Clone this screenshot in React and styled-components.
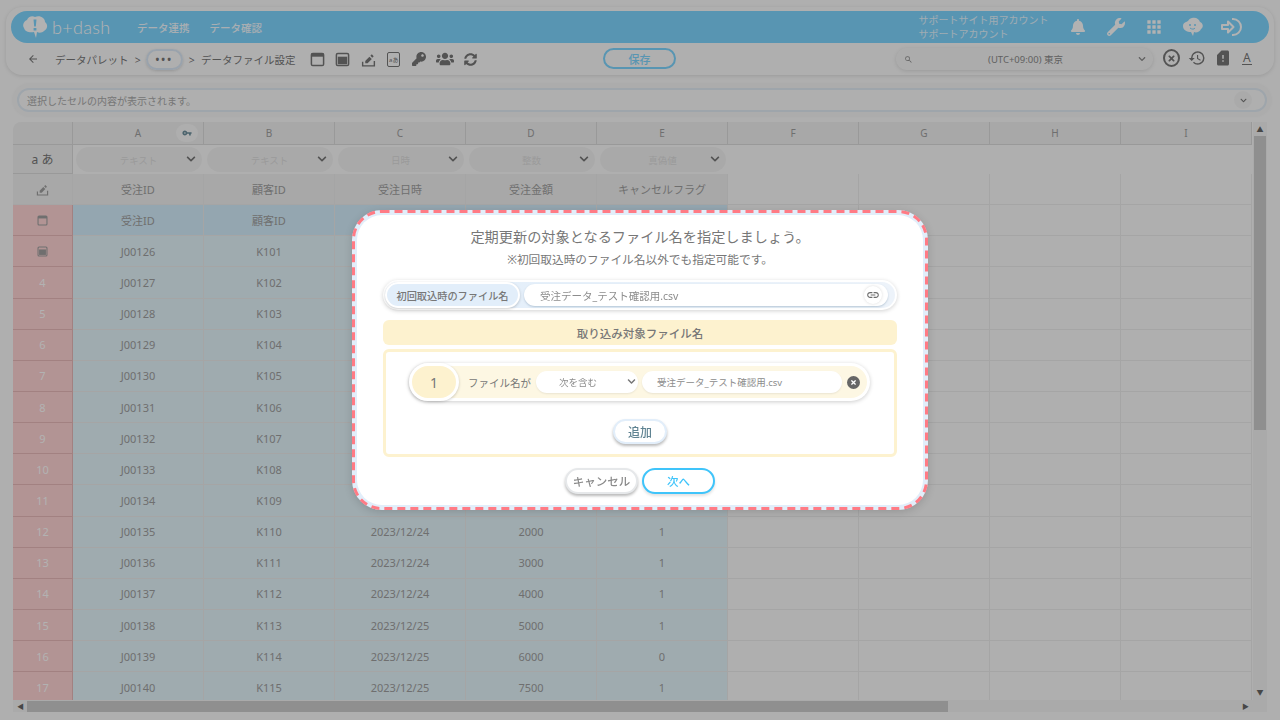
import React from "react";
import styled, { createGlobalStyle } from "styled-components";
import {
  FaBell,
  FaWrench,
  FaKey,
  FaUsers,
  FaSyncAlt,
  FaChevronDown,
  FaTimes,
} from "react-icons/fa";
import {
  MdApps,
  MdHistory,
  MdSearch,
  MdSimCardAlert,
  MdArrowBack,
  MdVpnKey,
  MdLink,
} from "react-icons/md";

const GlobalStyle = createGlobalStyle`
  html, body {
    margin: 0;
    height: 100%;
    overflow: hidden;
    background: #fbfbfb;
    font-family: "Noto Sans", "Noto Sans CJK JP", sans-serif;
    color: #777;
  }
  * { box-sizing: border-box; }
`;

const Page = styled.div`
  width: 1280px;
  height: 720px;
  display: flex;
  flex-direction: column;
  overflow: hidden;
`;

const HeaderCard = styled.header`
  margin: 7px 6px 0;
  height: 68px;
  padding: 4px 5px 0;
  border-radius: 16px;
  background: #fbfbfb;
  box-shadow: 0 1px 4px rgba(0, 0, 0, 0.12);
`;

const BlueBar = styled.div`
  height: 32px;
  border-radius: 16px;
  background: #7fd6ff;
  display: flex;
  align-items: center;
  padding: 0 19px 0 11px;
  color: #fff;
`;

const Logo = styled.div`
  display: flex;
  align-items: center;
  gap: 3px;
  width: 115px;
  font-family: "Lato", sans-serif;
  font-size: 18px;
  font-weight: 300;
  letter-spacing: 0.3px;
`;

const NavLink = styled.span`
  font-size: 10.5px;
  font-weight: 500;
  margin-right: 20px;
  white-space: nowrap;
  opacity: 0.9;
`;

const Account = styled.div`
  margin-left: auto;
  margin-right: 9px;
  width: 131px;
  font-size: 10px;
  line-height: 14.5px;
  white-space: nowrap;
  opacity: 0.8;
`;

const BarIcons = styled.div`
  display: grid;
  grid-auto-flow: column;
  grid-auto-columns: 38.3px;
  align-items: center;
  justify-items: center;
`;

const Toolbar = styled.div`
  height: 32px;
  display: flex;
  align-items: center;
  padding-left: 16px;
  font-size: 10.5px;
  color: #777;
  position: relative;
`;

const Crumb = styled.span`
  white-space: nowrap;
  word-spacing: 3.5px;
  margin-left: ${(p) => p.$left || 0}px;
`;

const DotsButton = styled.span`
  width: 37px;
  height: 21px;
  margin: 0 6px 0 5px;
  border-radius: 11px;
  border: 2px solid #dbe9f6;
  box-shadow: 0 1px 3px rgba(0, 0, 0, 0.15);
  display: flex;
  align-items: center;
  justify-content: center;
  font-weight: 700;
  letter-spacing: 2px;
  font-size: 10px;
`;

const ToolIcons = styled.div`
  display: grid;
  grid-auto-flow: column;
  grid-auto-columns: 25.5px;
  align-items: center;
  justify-items: center;
  margin-left: 9px;
  color: #777;
`;

const TextIconBox = styled.span`
  width: 13px;
  height: 15px;
  border: 1.5px solid #777;
  border-radius: 2px;
  font-size: 6px;
  display: flex;
  align-items: center;
  justify-content: center;
  white-space: nowrap;
`;

const SaveButton = styled.span`
  position: absolute;
  left: 592px;
  top: 5px;
  width: 73px;
  height: 21px;
  border-radius: 11px;
  border: 2px solid #7fd6ff;
  color: #7fd6ff;
  background: #fbfbfb;
  font-size: 11px;
  font-weight: 500;
  display: flex;
  align-items: center;
  justify-content: center;
`;

const ZoneSelect = styled.div`
  position: absolute;
  left: 885px;
  top: 5px;
  width: 257px;
  height: 22px;
  border-radius: 11px;
  background: #f7f7f7;
  box-shadow: 0 1px 4px rgba(0, 0, 0, 0.12);
  display: flex;
  align-items: center;
  justify-content: space-between;
  padding: 0 7px 0 8px;
  font-size: 9.5px;
  color: #8a8a8a;
`;

const RightIcons = styled.div`
  position: absolute;
  left: 1152px;
  top: 6px;
  display: flex;
  align-items: center;
  gap: 8px;
  font-size: 18px;
  color: #777;
`;

const CloseOval = styled.span`
  width: 17px;
  height: 18px;
  border-radius: 50%;
  border: 2px solid #777;
  font-size: 9px;
  display: flex;
  align-items: center;
  justify-content: center;
`;

const UnderlinedA = styled.span`
  font-size: 12px;
  line-height: 13px;
  border-bottom: 1.5px solid #777;
  padding: 0 1px;
  margin-left: 2px;
`;

const FormulaWrap = styled.div`
  margin: 9px 9px 0 13px;
  height: 32px;
  padding: 4px;
  border-radius: 16px;
  background: #f7f7f7;
  box-shadow: 0 0 3px rgba(0, 0, 0, 0.06);
`;

const FormulaBar = styled.div`
  height: 24px;
  border: 2px solid #e2ecf5;
  border-radius: 12px;
  background: #fbfbfb;
  display: flex;
  align-items: center;
  justify-content: space-between;
  padding: 0 13px 0 8px;
  font-size: 10px;
  color: #aaa;
`;

const ChevronBadge = styled.span`
  width: 18px;
  height: 18px;
  border-radius: 50%;
  background: #f4f4f4;
  color: #777;
  font-size: 7px;
  display: flex;
  align-items: center;
  justify-content: center;
`;

const GridArea = styled.div`
  margin: 6px 0 0 13px;
  display: grid;
  grid-template-columns: 1240px 14px;
  grid-template-rows: 578px 12px;
  width: 1254px;
`;

const Sheet = styled.div`
  display: grid;
  grid-template-columns: 60px repeat(9, 131px);
  grid-template-rows: 23px 29px repeat(17, 31.15px);
  overflow: hidden;
  border-top-left-radius: 8px;
  font-size: 11px;
`;

const tones = {
  head: "#f1f1f1",
  name: "#f1f1f1",
  side: "#ffd4d4",
  titleRow: "#d5eefc",
  data: "#e4f5fb",
  empty: "#fbfbfb",
};

const Cell = styled.div`
  position: relative;
  display: flex;
  align-items: center;
  justify-content: center;
  background: ${(p) => tones[p.$tone]};
  color: ${(p) => (p.$white ? "#fff" : "#a0a0a0")};
  border-right: ${(p) => (p.$noLine ? "none" : "1px solid #e9e9e9")};
  border-bottom: ${(p) => (p.$noLine ? "none" : "1px solid #e9e9e9")};
  border-color: ${(p) => (p.$tone === "head" ? "#dcdcdc" : p.$tone === "side" ? "#e8b9b9" : "#ececec")};
  font-size: ${(p) => (p.$tone === "head" ? "10px" : "11px")};
`;

const KeyBadge = styled.span`
  position: absolute;
  right: 5px;
  top: 2px;
  width: 22px;
  height: 18px;
  border-radius: 9px;
  background: #f9f9f9;
  color: #6c8f9c;
  font-size: 10px;
  display: flex;
  align-items: center;
  justify-content: center;
`;

const TypeSelect = styled.div`
  width: 126px;
  height: 25px;
  border-radius: 13px;
  background: #f3f3f3;
  color: #ddd;
  font-size: 9.5px;
  display: flex;
  align-items: center;
  justify-content: center;
  position: relative;
`;

const TypeChevron = styled.span`
  position: absolute;
  right: 6px;
  top: 7px;
  color: #777;
  font-size: 10px;
  line-height: 10px;
`;

const TypeLabel = styled.span`
  font-size: 12px;
  color: #777;
`;

const ScrollTrack = styled.div`
  background: #f4f4f4;
  display: flex;
  flex-direction: ${(p) => (p.$horizontal ? "row" : "column")};
  align-items: center;
  justify-content: space-between;
  padding: ${(p) => (p.$horizontal ? "0 4px" : "4px 0")};
  color: #666;
  font-size: 7px;
  line-height: 7px;
`;

const ScrollThumb = styled.div`
  background: #cdcdcd;
  ${(p) =>
    p.$horizontal
      ? "height: 11px; width: 921px; margin: 0 auto 0 3px;"
      : "width: 12px; height: 294px; margin: 3px 0 auto;"}
`;

const Overlay = styled.div`
  position: fixed;
  inset: 0;
  background: rgba(0, 0, 0, 0.3);
  backdrop-filter: blur(0.7px);
`;

const Modal = styled.div`
  position: fixed;
  left: 352px;
  top: 210px;
  width: 576px;
  height: 300px;
  border-radius: 30px;
  background: #e2eefa;
  padding: 5px;
  box-shadow: 0 2px 8px rgba(0, 0, 0, 0.15);
`;

const DashedEdge = styled.svg`
  position: absolute;
  inset: 0;
  pointer-events: none;
`;

const ModalBody = styled.div`
  height: 100%;
  border-radius: 25px;
  background: #fff;
  padding: 12px 26px 0;
  display: flex;
  flex-direction: column;
  align-items: center;
  color: #777;
`;

const Title = styled.div`
  font-size: 14.2px;
  line-height: 20px;
  text-align: center;
`;

const SubTitle = styled.div`
  font-size: 11.7px;
  line-height: 16px;
  margin-top: 4px;
  text-align: center;
`;

const FileRow = styled.div`
  width: 514px;
  height: 30px;
  margin-top: 13px;
  padding: 2px;
  border-radius: 15px;
  background: #fff;
  box-shadow: 0 1px 4px rgba(0, 0, 0, 0.18);
`;

const FileRowInner = styled.div`
  height: 100%;
  border-radius: 13px;
  background: linear-gradient(to right, #e2eefa, #edf3fa);
  display: flex;
  align-items: center;
`;

const FileLabel = styled.span`
  width: 135px;
  height: 26px;
  border-radius: 13px;
  border: 2px solid #fff;
  background: #e2eefa;
  box-shadow: 0 1px 3px rgba(0, 0, 0, 0.2);
  font-size: 10.2px;
  font-weight: 500;
  display: flex;
  align-items: center;
  justify-content: center;
`;

const FileInput = styled.div`
  margin-left: 4px;
  width: 364px;
  height: 22px;
  border-radius: 11px;
  background: #fff;
  box-shadow: 0 1px 2px rgba(90, 120, 150, 0.35);
  padding-left: 16px;
  font-size: 10.5px;
  color: #8c8c8c;
  display: flex;
  align-items: center;
  position: relative;
`;

const LinkBadge = styled.span`
  position: absolute;
  right: 6px;
  top: 2px;
  width: 18px;
  height: 18px;
  border-radius: 50%;
  background: #fff;
  box-shadow: 0 0 3px rgba(0, 0, 0, 0.15);
  font-size: 14px;
  color: #6d6d6d;
  display: flex;
  align-items: center;
  justify-content: center;
`;

const SectionHead = styled.div`
  width: 514px;
  height: 25px;
  margin-top: 10px;
  border-radius: 6px;
  background: #fdf2cf;
  font-size: 11.5px;
  font-weight: 500;
  display: flex;
  align-items: center;
  justify-content: center;
`;

const SectionBox = styled.div`
  width: 514px;
  height: 108px;
  margin-top: 4px;
  border: 3px solid #fdf2cf;
  border-radius: 6px;
  padding: 11px 0 0 23px;
  display: flex;
  flex-direction: column;
`;

const ConditionRow = styled.div`
  width: 461px;
  height: 38px;
  padding: 3px;
  border-radius: 19px;
  background: #fff;
  box-shadow: 0 1px 4px rgba(0, 0, 0, 0.2);
`;

const ConditionInner = styled.div`
  height: 100%;
  border-radius: 16px;
  background: #fdf7e3;
  display: flex;
  align-items: center;
`;

const NumberBadge = styled.span`
  width: 50px;
  height: 38px;
  margin-left: -3px;
  border-radius: 19px;
  border: 3px solid #fff;
  background: #fdf2cf;
  box-shadow: 0 1px 3px rgba(0, 0, 0, 0.2);
  font-size: 14px;
  display: flex;
  align-items: center;
  justify-content: center;
  flex-shrink: 0;
`;

const ConditionLabel = styled.span`
  margin-left: 9px;
  font-size: 10.5px;
  white-space: nowrap;
`;

const ConditionSelect = styled.div`
  width: 102px;
  height: 22px;
  margin-left: 5px;
  border-radius: 11px;
  background: #fff;
  box-shadow: 0 1px 2px rgba(0, 0, 0, 0.08);
  font-size: 9.5px;
  color: #8c8c8c;
  display: flex;
  align-items: center;
  justify-content: center;
  padding-right: 18px;
  position: relative;
`;

const SelectChevron = styled.span`
  position: absolute;
  right: 2px;
  top: 6px;
  font-size: 9px;
  line-height: 9px;
  color: #777;
`;

const ConditionInput = styled.div`
  width: 200px;
  height: 22px;
  margin-left: 4px;
  border-radius: 11px;
  background: #fff;
  box-shadow: 0 1px 2px rgba(0, 0, 0, 0.08);
  padding-left: 15px;
  font-size: 9.5px;
  color: #8c8c8c;
  display: flex;
  align-items: center;
`;

const RemoveDot = styled.span`
  width: 13px;
  height: 13px;
  margin-left: 5px;
  border-radius: 50%;
  background: #666;
  color: #fff;
  font-size: 7px;
  display: flex;
  align-items: center;
  justify-content: center;
`;

const AddButton = styled.span`
  align-self: center;
  margin: 18px 23px 0 0;
  width: 54px;
  height: 25px;
  border-radius: 13px;
  border: 2px solid #e2eefa;
  background: #fff;
  box-shadow: 0 2px 3px rgba(0, 0, 0, 0.28);
  color: #5f8392;
  font-size: 12px;
  font-weight: 500;
  display: flex;
  align-items: center;
  justify-content: center;
`;

const Actions = styled.div`
  display: flex;
  gap: 4px;
  margin-top: 11px;
`;

const ActionButton = styled.span`
  width: 73px;
  height: 26px;
  border-radius: 13px;
  border: 2px solid ${(p) => (p.$primary ? "#3fc4fa" : "#e6e8ea")};
  background: #fff;
  box-shadow: 0 2px 3px rgba(0, 0, 0, ${(p) => (p.$primary ? "0.12" : "0.28")});
  color: ${(p) => (p.$primary ? "#3fc4fa" : "#8a8a8a")};
  font-size: 11.5px;
  font-weight: 500;
  display: flex;
  align-items: center;
  justify-content: center;
`;

const columns = ["A", "B", "C", "D", "E", "F", "G", "H", "I"];
const types = ["テキスト", "テキスト", "日時", "整数", "真偽値"];
const names = ["受注ID", "顧客ID", "受注日時", "受注金額", "キャンセルフラグ"];
const titles = ["受注ID", "顧客ID"];

// the first nine rows sit behind the dialog from column C on
const rows = [
  [], [], [], [], [], [], [], [], [],
  ["2023/12/24", 2000, 1],
  ["2023/12/24", 3000, 1],
  ["2023/12/24", 4000, 1],
  ["2023/12/25", 5000, 1],
  ["2023/12/25", 6000, 0],
  ["2023/12/25", 7500, 1],
].map((r, i) => [`J00${126 + i}`, `K${101 + i}`, ...r]);

const WindowIcon = ({ size = 15, filled }) => (
  <svg width={size} height={size} viewBox="0 0 16 16" fill="none">
    <rect x="1.5" y="1.5" width="13" height="13" rx="1.5" stroke="currentColor" strokeWidth="1.6" />
    {filled ? (
      <rect x="3" y="5" width="10" height="8" fill="currentColor" />
    ) : (
      <rect x="1.5" y="1.5" width="13" height="3.5" fill="currentColor" />
    )}
  </svg>
);

const PenIcon = ({ size = 15 }) => (
  <svg width={size} height={size} viewBox="0 0 16 16" fill="currentColor">
    <path d="M9 5l2.5 2.5L7 12H4.5V9.5z" />
    <path d="M10 4l1.5-1.5 2 2L12 6z" />
    <path d="M1 10.5h1.5V14h11V9.5H15V15.5H1z" />
  </svg>
);

const LogoMark = () => (
  <svg width="27" height="24" viewBox="0 0 27 24">
    <path
      d="M13 2c5-2 10 1 10 5 3 2 3 7-1 9-2 2-5 2-7 1l-1 6-2-6c-4 1-9 0-10-4-2-3 0-7 3-8 1-3 5-5 8-3z"
      fill="#fff"
    />
    <path d="M11.5 4.5h3l-.7 7h-1.6z M11.6 13h2.8v2.6h-2.8z" fill="#7fd6ff" />
  </svg>
);

const ChatFace = () => (
  <svg width="22" height="20" viewBox="0 0 22 20">
    <path d="M10 1c4-1 7 1 8 4 3 1 4 5 1 7-1 3-5 4-7 3l-1 4-2-4c-4 0-8-2-8-6s4-4 5-5c1-2 3-3 4-3z" fill="currentColor" />
    <circle cx="8" cy="8" r="1" fill="#7fd6ff" />
    <circle cx="13" cy="8" r="1" fill="#7fd6ff" />
    <path d="M8 11c2 1.5 4 1.5 5 0" stroke="#7fd6ff" strokeWidth="1" fill="none" />
  </svg>
);

const LoginIcon = () => (
  <svg width="22" height="20" viewBox="0 0 22 20" fill="none" stroke="currentColor" strokeWidth="2">
    <path d="M2 8h6V4.5L13.5 10 8 15.5V12H2z" strokeLinejoin="round" />
    <path d="M12 2h1a8 8 0 0 1 0 16h-1" />
  </svg>
);

const App = () => (
  <>
    <GlobalStyle />
    <Page>
      <HeaderCard>
        <BlueBar>
          <Logo>
            <LogoMark />
            b+dash
          </Logo>
          <NavLink>データ連携</NavLink>
          <NavLink>データ確認</NavLink>
          <Account>
            サポートサイト用アカウント
            <br />
            サポートアカウント
          </Account>
          <BarIcons>
            <FaBell size={16} />
            <FaWrench size={18} />
            <MdApps size={20} />
            <ChatFace />
            <LoginIcon />
          </BarIcons>
        </BlueBar>
        <Toolbar>
          <MdArrowBack size={12} />
          <Crumb $left={16}>データパレット &gt;</Crumb>
          <DotsButton>•••</DotsButton>
          <Crumb>&gt; データファイル設定</Crumb>
          <ToolIcons>
            <WindowIcon />
            <WindowIcon filled />
            <PenIcon />
            <TextIconBox>aあ</TextIconBox>
            <FaKey size={14} />
            <FaUsers size={18} />
            <FaSyncAlt size={13} />
          </ToolIcons>
          <SaveButton>保存</SaveButton>
          <ZoneSelect>
            <MdSearch size={9} />
            <span>(UTC+09:00) 東京</span>
            <FaChevronDown size={8} />
          </ZoneSelect>
          <RightIcons>
            <CloseOval>
              <FaTimes />
            </CloseOval>
            <MdHistory size={18} />
            <MdSimCardAlert size={18} />
            <UnderlinedA>A</UnderlinedA>
          </RightIcons>
        </Toolbar>
      </HeaderCard>

      <FormulaWrap>
        <FormulaBar>
          選択したセルの内容が表示されます。
          <ChevronBadge>
            <FaChevronDown />
          </ChevronBadge>
        </FormulaBar>
      </FormulaWrap>

      <GridArea>
        <Sheet>
          <Cell $tone="head" />
          {columns.map((c) => (
            <Cell key={c} $tone="head">
              {c}
              {c === "A" && (
                <KeyBadge>
                  <MdVpnKey />
                </KeyBadge>
              )}
            </Cell>
          ))}

          <Cell $tone="head">
            <TypeLabel>a あ</TypeLabel>
          </Cell>
          {columns.map((c, i) =>
            types[i] ? (
              <Cell key={c} $tone="empty" $noLine>
                <TypeSelect>
                  {types[i]}
                  <TypeChevron>
                    <FaChevronDown />
                  </TypeChevron>
                </TypeSelect>
              </Cell>
            ) : (
              <Cell key={c} $tone="empty" $noLine />
            )
          )}

          <Cell $tone="name">
            <PenIcon size={13} />
          </Cell>
          {columns.map((c, i) =>
            names[i] ? (
              <Cell key={c} $tone="name">
                {names[i]}
              </Cell>
            ) : (
              <Cell key={c} $tone="empty" />
            )
          )}

          <Cell $tone="side">
            <WindowIcon size={11} />
          </Cell>
          {columns.map((c, i) =>
            i < 5 ? (
              <Cell key={c} $tone="titleRow">
                {titles[i]}
              </Cell>
            ) : (
              <Cell key={c} $tone="empty" />
            )
          )}

          {rows.map((row, r) => (
            <React.Fragment key={row[0]}>
              <Cell $tone="side" $white={r > 0}>
                {r === 0 ? <WindowIcon size={11} filled /> : r + 3}
              </Cell>
              {columns.map((c, i) =>
                i < 5 ? (
                  <Cell key={c} $tone="data">
                    {row[i]}
                  </Cell>
                ) : (
                  <Cell key={c} $tone="empty" />
                )
              )}
            </React.Fragment>
          ))}
        </Sheet>
        <ScrollTrack>
          <span>▲</span>
          <ScrollThumb />
          <span>▼</span>
        </ScrollTrack>
        <ScrollTrack $horizontal>
          <span>◀</span>
          <ScrollThumb $horizontal />
          <span>▶</span>
        </ScrollTrack>
        <ScrollTrack />
      </GridArea>
    </Page>

    <Overlay />

    <Modal>
      <DashedEdge width="576" height="300">
        <rect
          x="1.5"
          y="1.5"
          width="573"
          height="297"
          rx="28"
          fill="none"
          stroke="#ff7b85"
          strokeWidth="3"
          strokeDasharray="8 5"
        />
      </DashedEdge>
      <ModalBody>
        <Title>定期更新の対象となるファイル名を指定しましょう。</Title>
        <SubTitle>※初回取込時のファイル名以外でも指定可能です。</SubTitle>
        <FileRow>
          <FileRowInner>
            <FileLabel>初回取込時のファイル名</FileLabel>
            <FileInput>
              受注データ_テスト確認用.csv
              <LinkBadge>
                <MdLink />
              </LinkBadge>
            </FileInput>
          </FileRowInner>
        </FileRow>
        <SectionHead>取り込み対象ファイル名</SectionHead>
        <SectionBox>
          <ConditionRow>
            <ConditionInner>
              <NumberBadge>1</NumberBadge>
              <ConditionLabel>ファイル名が</ConditionLabel>
              <ConditionSelect>
                次を含む
                <SelectChevron>
                  <FaChevronDown />
                </SelectChevron>
              </ConditionSelect>
              <ConditionInput>受注データ_テスト確認用.csv</ConditionInput>
              <RemoveDot>
                <FaTimes />
              </RemoveDot>
            </ConditionInner>
          </ConditionRow>
          <AddButton>追加</AddButton>
        </SectionBox>
        <Actions>
          <ActionButton>キャンセル</ActionButton>
          <ActionButton $primary>次へ</ActionButton>
        </Actions>
      </ModalBody>
    </Modal>
  </>
);

export default App;
